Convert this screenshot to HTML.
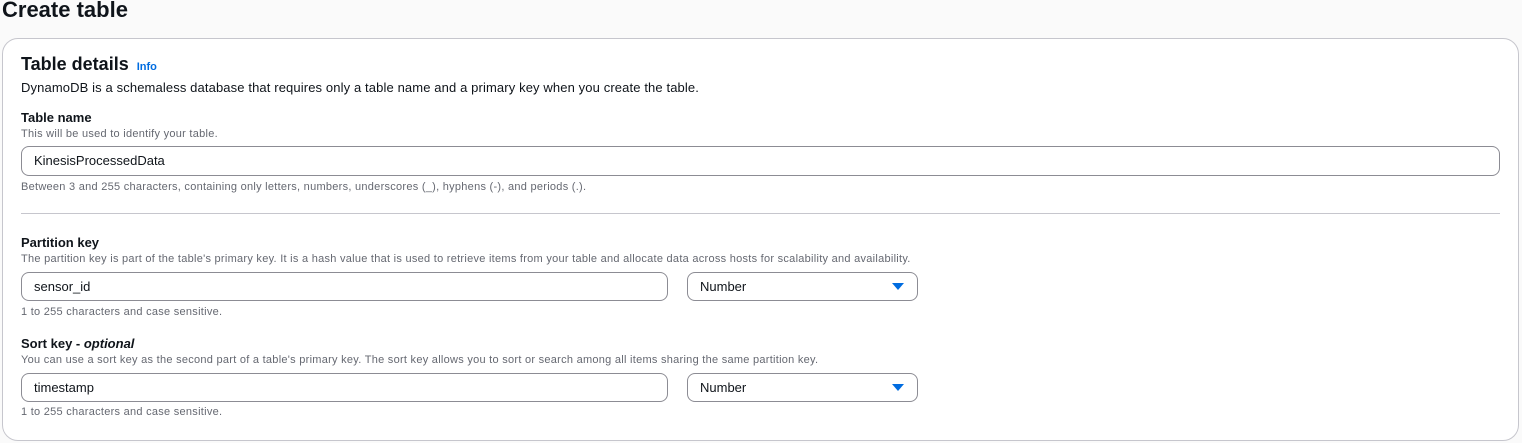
<!DOCTYPE html>
<html><head><style>
body{margin:0;width:1522px;height:443px;background:#fafafa;font-family:"Liberation Sans",sans-serif;color:#0f141a;position:relative;overflow:hidden}
.a{position:absolute;white-space:nowrap}
.card{position:absolute;left:2px;top:38px;width:1515px;height:401px;background:#fff;border:1px solid #c6c6cd;border-radius:16px}
.lbl{font-size:13px;font-weight:bold}
.h{font-size:11px;color:#656871;letter-spacing:0.27px}
.in{position:absolute;border:1px solid #8c8c94;border-radius:8px;background:#fff;box-sizing:border-box;font-size:13px;padding-left:12px;line-height:27px}
.tri{position:absolute;right:13px;top:10px;width:0;height:0;border-left:6px solid transparent;border-right:6px solid transparent;border-top:7px solid #006ce0}
</style></head><body>
<div class="a" style="left:2px;top:-3px;font-size:22px;font-weight:bold">Create table</div>
<div class="card"></div>
<div class="a" style="left:21px;top:54px;font-size:18px;font-weight:bold">Table details <span style="font-size:11px;color:#006ce0;margin-left:3px">Info</span></div>
<div class="a" style="left:21px;top:80px;font-size:13px;color:#0f141a;letter-spacing:0.12px">DynamoDB is a schemaless database that requires only a table name and a primary key when you create the table.</div>
<div class="a lbl" style="left:21px;top:110px">Table name</div>
<div class="a h" style="left:21px;top:128px">This will be used to identify your table.</div>
<div class="in" style="left:21px;top:146px;width:1479px;height:30px">KinesisProcessedData</div>
<div class="a h" style="left:21px;top:181px">Between 3 and 255 characters, containing only letters, numbers, underscores (_), hyphens (-), and periods (.).</div>
<div class="a" style="left:21px;top:213px;width:1479px;height:1px;background:#c6c6cd"></div>
<div class="a lbl" style="left:21px;top:235px">Partition key</div>
<div class="a h" style="left:21px;top:253px">The partition key is part of the table's primary key. It is a hash value that is used to retrieve items from your table and allocate data across hosts for scalability and availability.</div>
<div class="in" style="left:21px;top:272px;width:647px;height:29px">sensor_id</div>
<div class="in" style="left:687px;top:272px;width:231px;height:29px">Number<div class="tri"></div></div>
<div class="a h" style="left:21px;top:306px">1 to 255 characters and case sensitive.</div>
<div class="a lbl" style="left:21px;top:336px">Sort key - <i>optional</i></div>
<div class="a h" style="left:21px;top:354px">You can use a sort key as the second part of a table's primary key. The sort key allows you to sort or search among all items sharing the same partition key.</div>
<div class="in" style="left:21px;top:373px;width:647px;height:29px">timestamp</div>
<div class="in" style="left:687px;top:373px;width:231px;height:29px">Number<div class="tri"></div></div>
<div class="a h" style="left:21px;top:406px">1 to 255 characters and case sensitive.</div>
</body></html>
